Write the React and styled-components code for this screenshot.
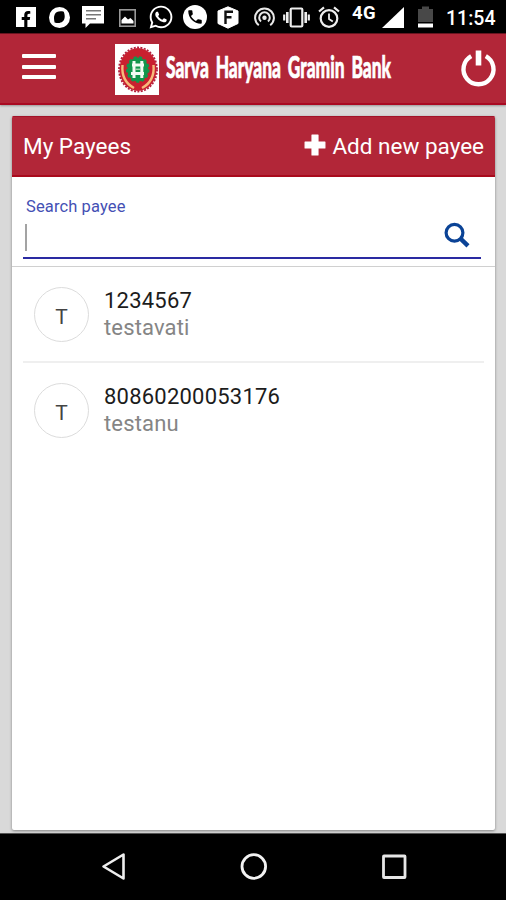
import styled, { createGlobalStyle } from 'styled-components';
import React from "react";
import { FaFacebookF, FaWhatsapp } from 'react-icons/fa';
import { MdPhone } from 'react-icons/md';

const GlobalStyle = createGlobalStyle`
  * {
    box-sizing: border-box;
  }

  body {
    margin: 0;
    background: #d9d9d9;
    font-family: Roboto, "Liberation Sans", sans-serif;
  }

  svg {
    display: block;
    overflow: visible;
  }
`;

const Screen = styled.div`
  width: 506px;
  height: 900px;
  display: flex;
  flex-direction: column;
  background: #d9d9d9;
  overflow: hidden;
`;

const StatusBar = styled.div`
  height: 34px;
  flex: none;
  display: flex;
  align-items: flex-start;
  padding-left: 16px;
  background: #000;
  border-bottom: 1px solid #6b1520;
  color: #fff;
`;

const StatusIcon = styled.div`
  flex: none;
  width: ${({ $w }) => $w}px;
  margin-left: ${({ $gap }) => $gap || 0}px;
  margin-top: ${({ $top }) => $top}px;
`;

const FacebookBox = styled.div`
  width: 20px;
  height: 20px;
  display: flex;
  justify-content: flex-end;
  align-items: flex-end;
  padding-right: 2px;
  background: #fff;
  color: #000;
`;

const PhoneCircle = styled.div`
  width: 24px;
  height: 24px;
  display: flex;
  justify-content: center;
  align-items: center;
  border-radius: 50%;
  background: #fff;
  color: #000;
`;

const NetworkType = styled(StatusIcon)`
  font-size: 18.5px;
  font-weight: 700;
  line-height: 20px;
  letter-spacing: 0.4px;
  white-space: nowrap;
`;

const Clock = styled(StatusIcon)`
  font-size: 19.5px;
  font-weight: 500;
  line-height: 22px;
  white-space: nowrap;
`;

const Header = styled.header`
  height: 71px;
  flex: none;
  display: flex;
  align-items: flex-start;
  background: #b22638;
  border-bottom: 2px solid #a90a22;
  box-shadow: 0 1px 2px rgba(0, 0, 0, 0.3);
`;

const MenuButton = styled.div`
  width: 34px;
  height: 25px;
  margin: 20px 0 0 22px;
  display: flex;
  flex-direction: column;
  justify-content: space-between;
`;

const MenuLine = styled.span`
  height: 4px;
  border-radius: 1px;
  background: #fff;
`;

const BankLogo = styled.div`
  width: 44px;
  height: 51px;
  margin: 10px 0 0 59px;
  background: #fff;
`;

const BankName = styled.div`
  width: 232px;
  margin: 10px 0 0 6px;
`;

const PowerButton = styled.div`
  margin: 16px 0 0 64px;
`;

const Card = styled.main`
  width: 483px;
  height: 714px;
  flex: none;
  margin: 11px 0 0 12px;
  background: #fff;
  border-radius: 2px;
  box-shadow: 0 1px 3px rgba(0, 0, 0, 0.4);
  overflow: hidden;
`;

const CardHeader = styled.div`
  height: 61px;
  display: flex;
  justify-content: space-between;
  align-items: center;
  padding: 0 11px;
  background: #b22638;
  border-top: 1px solid #a2142a;
  border-bottom: 2px solid #a90a1c;
  color: #fff;
  font-size: 22.5px;
`;

const AddPayee = styled.div`
  display: flex;
  align-items: center;
  gap: 6px;
`;

const SearchBox = styled.div`
  height: 90px;
  padding: 20px 14px 0 11px;
  border-bottom: 1px solid #d0d0d0;
`;

const SearchLabel = styled.div`
  padding-left: 3px;
  font-size: 16.5px;
  line-height: 20px;
  letter-spacing: 0.12px;
  color: #4450b4;
`;

const SearchField = styled.div`
  height: 42px;
  display: flex;
  justify-content: space-between;
  padding: 7px 11px 0 2px;
  border-bottom: 2px solid #2a2aa2;
`;

const Caret = styled.span`
  width: 2px;
  height: 27px;
  background: #a3a3a3;
`;

const PayeeList = styled.div`
  padding: 0 11px;
`;

const PayeeRow = styled.div`
  height: 96px;
  display: flex;
  align-items: flex-start;
  padding: 20px 0 0 11px;
  border-bottom: ${({ $last }) => ($last ? '0' : '2px solid #efefef')};
`;

const Avatar = styled.div`
  width: 55px;
  height: 55px;
  flex: none;
  display: flex;
  justify-content: center;
  align-items: center;
  padding-top: 4px;
  border: 1px solid #dcdcdc;
  border-radius: 50%;
  color: #444;
  font-size: 21px;
`;

const PayeeInfo = styled.div`
  margin-left: 15px;
  font-size: 22px;
  line-height: 27px;
`;

const Account = styled.div`
  color: #1c1c1c;
  letter-spacing: 0.22px;
`;

const Nickname = styled.div`
  color: #858585;
  letter-spacing: 0.15px;
`;

const NavBar = styled.nav`
  height: 67px;
  flex: none;
  margin-top: auto;
  display: flex;
  align-items: flex-start;
  justify-content: space-between;
  padding: 19px 99px 0 101px;
  background: #000;
  border-top: 1px solid #555;
`;

const payees = [
  { account: '1234567', name: 'testavati' },
  { account: '80860200053176', name: 'testanu' },
];

const Emblem = () => (
  <svg width="44" height="51" viewBox="0 0 44 51">
    <ellipse cx="23" cy="25.5" rx="18.5" ry="21.5" fill="#c9202f" />
    <ellipse cx="23" cy="25.5" rx="19" ry="22" fill="none" stroke="#b31f3c" strokeWidth="1.8" strokeDasharray="2 1.4" />
    <path d="M7.5 21C6.5 32 11.5 40 19 44" fill="none" stroke="#f6bb7c" strokeWidth="2.4" />
    <path d="M38.5 21C39.5 32 34.5 40 27 44" fill="none" stroke="#f6bb7c" strokeWidth="2.4" />
    <ellipse cx="22.8" cy="25.5" rx="10.5" ry="12" fill="#12964c" />
    <ellipse cx="22.8" cy="25.5" rx="10.5" ry="12" fill="none" stroke="#12964c" strokeWidth="2.5" strokeDasharray="3 2.4" />
    <path d="M19 17V34M26.8 17V34M17 21H29M16 29.5H29" stroke="#f4fbf4" strokeWidth="3" fill="none" />
    <path d="M20 25.3H25.5" stroke="#9fd5ae" strokeWidth="1.5" />
  </svg>
);

const StatusIcons = () => (
  <StatusBar>
    <StatusIcon $w={20} $top={7}>
      <FacebookBox><FaFacebookF size={16} /></FacebookBox>
    </StatusIcon>
    <StatusIcon $w={21} $gap={13} $top={7}>
      <svg width="21" height="21" viewBox="0 0 21 21">
        <path fillRule="evenodd" fill="#fff" d="M10.5 0A10.5 10.5 0 1 1 10.5 21A10.5 10.5 0 1 1 10.5 0ZM14.8 4.8C11 3.8 7 4.4 5.6 7.8C4.6 10 5 12.5 5.6 15.4C8.5 16.4 11.5 16.4 13.6 14.6C16.2 12.3 16.2 9 14.8 4.8Z" />
      </svg>
    </StatusIcon>
    <StatusIcon $w={22} $gap={12} $top={6}>
      <svg width="22" height="22" viewBox="0 0 22 22">
        <path fill="#fff" d="M0 0H22V17.5H8L3.5 22V17.5H0Z" />
        <path d="M4 4.8H19M4 8.8H19M4 12.7H14" stroke="#777" strokeWidth="1.4" />
      </svg>
    </StatusIcon>
    <StatusIcon $w={17} $gap={15} $top={9}>
      <svg width="17" height="18" viewBox="0 0 17 18">
        <rect x="0.8" y="0.8" width="15.4" height="16.4" fill="#050505" stroke="#999" strokeWidth="1.6" />
        <path d="M2.5 14.5V11L6 7.5L9 10.5L11.5 9L14.5 12V14.5Z" fill="#fff" />
      </svg>
    </StatusIcon>
    <StatusIcon $w={25} $gap={12} $top={4}><FaWhatsapp size={26} /></StatusIcon>
    <StatusIcon $w={24} $gap={10} $top={5}>
      <PhoneCircle><MdPhone size={18} /></PhoneCircle>
    </StatusIcon>
    <StatusIcon $w={22} $gap={10} $top={6}>
      <svg width="22" height="23" viewBox="0 0 22 23">
        <path fill="#fff" stroke="#fff" strokeLinejoin="round" strokeWidth="1" d="M11 0.8L21 5V17.5L11 22.2L1 17.5V5Z" />
        <path d="M8.5 18V5.7H16M8.5 11.3H14.5" stroke="#111" strokeWidth="2.4" fill="none" />
      </svg>
    </StatusIcon>
    <StatusIcon $w={21} $gap={15} $top={7}>
      <svg width="21" height="21" viewBox="0 0 21 21" fill="none" stroke="#e8e8e8" strokeWidth="2">
        <path d="M4.8 18.3A9.4 9.4 0 1 1 16.2 18.3" />
        <path d="M7 14.6A5.3 5.3 0 1 1 14 14.6" />
        <circle cx="10.5" cy="10.8" r="2.2" fill="#e8e8e8" stroke="none" />
      </svg>
    </StatusIcon>
    <StatusIcon $w={27} $gap={8} $top={7}>
      <svg width="27" height="21" viewBox="0 0 27 21" fill="none" stroke="#eee">
        <rect x="7.7" y="1.5" width="11.6" height="18" rx="1" strokeWidth="2.2" />
        <path d="M4.3 5V16M22.7 5V16" strokeWidth="2.6" />
        <path d="M1.2 7.5V13.5M25.8 7.5V13.5" strokeWidth="2.2" />
      </svg>
    </StatusIcon>
    <StatusIcon $w={22} $gap={8} $top={6}>
      <svg width="22" height="23" viewBox="0 0 22 23" fill="none" stroke="#eee" strokeWidth="2.2">
        <circle cx="11" cy="12.5" r="8.3" />
        <path d="M1 5.5L6 1.4M21 5.5L16 1.4" />
        <path d="M11 7.5V13L14.8 15.6" strokeWidth="1.8" />
      </svg>
    </StatusIcon>
    <NetworkType $w={26} $gap={12} $top={3}>4G</NetworkType>
    <StatusIcon $w={22} $gap={4} $top={7}>
      <svg width="22" height="21" viewBox="0 0 22 21"><path d="M22 0V21H0Z" fill="#fff" /></svg>
    </StatusIcon>
    <StatusIcon $w={15} $gap={14} $top={6}>
      <svg width="15" height="22" viewBox="0 0 15 22">
        <path d="M0 3H4V0.5H11V3H15V16H0Z" fill="#484848" />
        <path d="M0 17.5H15V21.5H0Z" fill="#fff" />
      </svg>
    </StatusIcon>
    <Clock $w={52} $gap={13} $top={8}>11:54</Clock>
  </StatusBar>
);

const App = () => {
  return (
    <Screen>
      <GlobalStyle />
      <StatusIcons />
      <Header>
        <MenuButton>
          <MenuLine />
          <MenuLine />
          <MenuLine />
        </MenuButton>
        <BankLogo><Emblem /></BankLogo>
        <BankName>
          <svg width="232" height="50" viewBox="0 0 232 50">
            <text
              x="1"
              y="34"
              fill="#fff"
              stroke="#fff"
              strokeWidth="0.7"
              fontFamily="Lato, sans-serif"
              fontWeight="900"
              fontSize="31"
              wordSpacing="5"
              textLength="225"
              lengthAdjust="spacingAndGlyphs"
            >
              Sarva Haryana Gramin Bank
            </text>
          </svg>
        </BankName>
        <PowerButton>
          <svg width="35" height="37" viewBox="0 0 35 37">
            <path d="M10.2 6.1A15 15 0 1 0 24.8 6.1" fill="none" stroke="#fff" strokeWidth="4.4" />
            <path d="M17.5 0.5V15.5" stroke="#fff" strokeWidth="5.6" />
          </svg>
        </PowerButton>
      </Header>
      <Card>
        <CardHeader>
          <span>My Payees</span>
          <AddPayee>
            <svg width="22" height="22" viewBox="0 0 21 21">
              <path d="M7.6 0H13.4V6.6H20V12.4H13.4V19H7.6V12.4H1V6.6H7.6Z" fill="#fff" stroke="#fff" strokeWidth="1" strokeLinejoin="round" />
            </svg>
            <span>Add new payee</span>
          </AddPayee>
        </CardHeader>
        <SearchBox>
          <SearchLabel>Search payee</SearchLabel>
          <SearchField>
            <Caret />
            <svg width="26" height="26" viewBox="0 0 26 26">
              <circle cx="10.5" cy="8.7" r="8.4" fill="none" stroke="#0b4396" strokeWidth="3.2" />
              <path d="M16.5 14.7L24 21.9" stroke="#0b4396" strokeWidth="4.4" />
            </svg>
          </SearchField>
        </SearchBox>
        <PayeeList>
          {payees.map((payee, idx) => (
            <PayeeRow key={payee.account} $last={idx === payees.length - 1}>
              <Avatar>T</Avatar>
              <PayeeInfo>
                <Account>{payee.account}</Account>
                <Nickname>{payee.name}</Nickname>
              </PayeeInfo>
            </PayeeRow>
          ))}
        </PayeeList>
      </Card>
      <NavBar>
        <svg width="26" height="28" viewBox="0 0 26 28">
          <path d="M22.5 1.5V25.5L2.5 13.5Z" fill="none" stroke="#eee" strokeWidth="2.6" strokeLinejoin="round" />
        </svg>
        <svg width="27" height="28" viewBox="0 0 27 28">
          <circle cx="12.8" cy="13.5" r="11.8" fill="none" stroke="#f2f2f2" strokeWidth="2.8" />
        </svg>
        <svg width="25" height="28" viewBox="0 0 25 28">
          <rect x="1.5" y="3" width="21.5" height="21.5" rx="0.5" fill="none" stroke="#e6e6e6" strokeWidth="2.8" />
        </svg>
      </NavBar>
    </Screen>
  );
};

export default App;
